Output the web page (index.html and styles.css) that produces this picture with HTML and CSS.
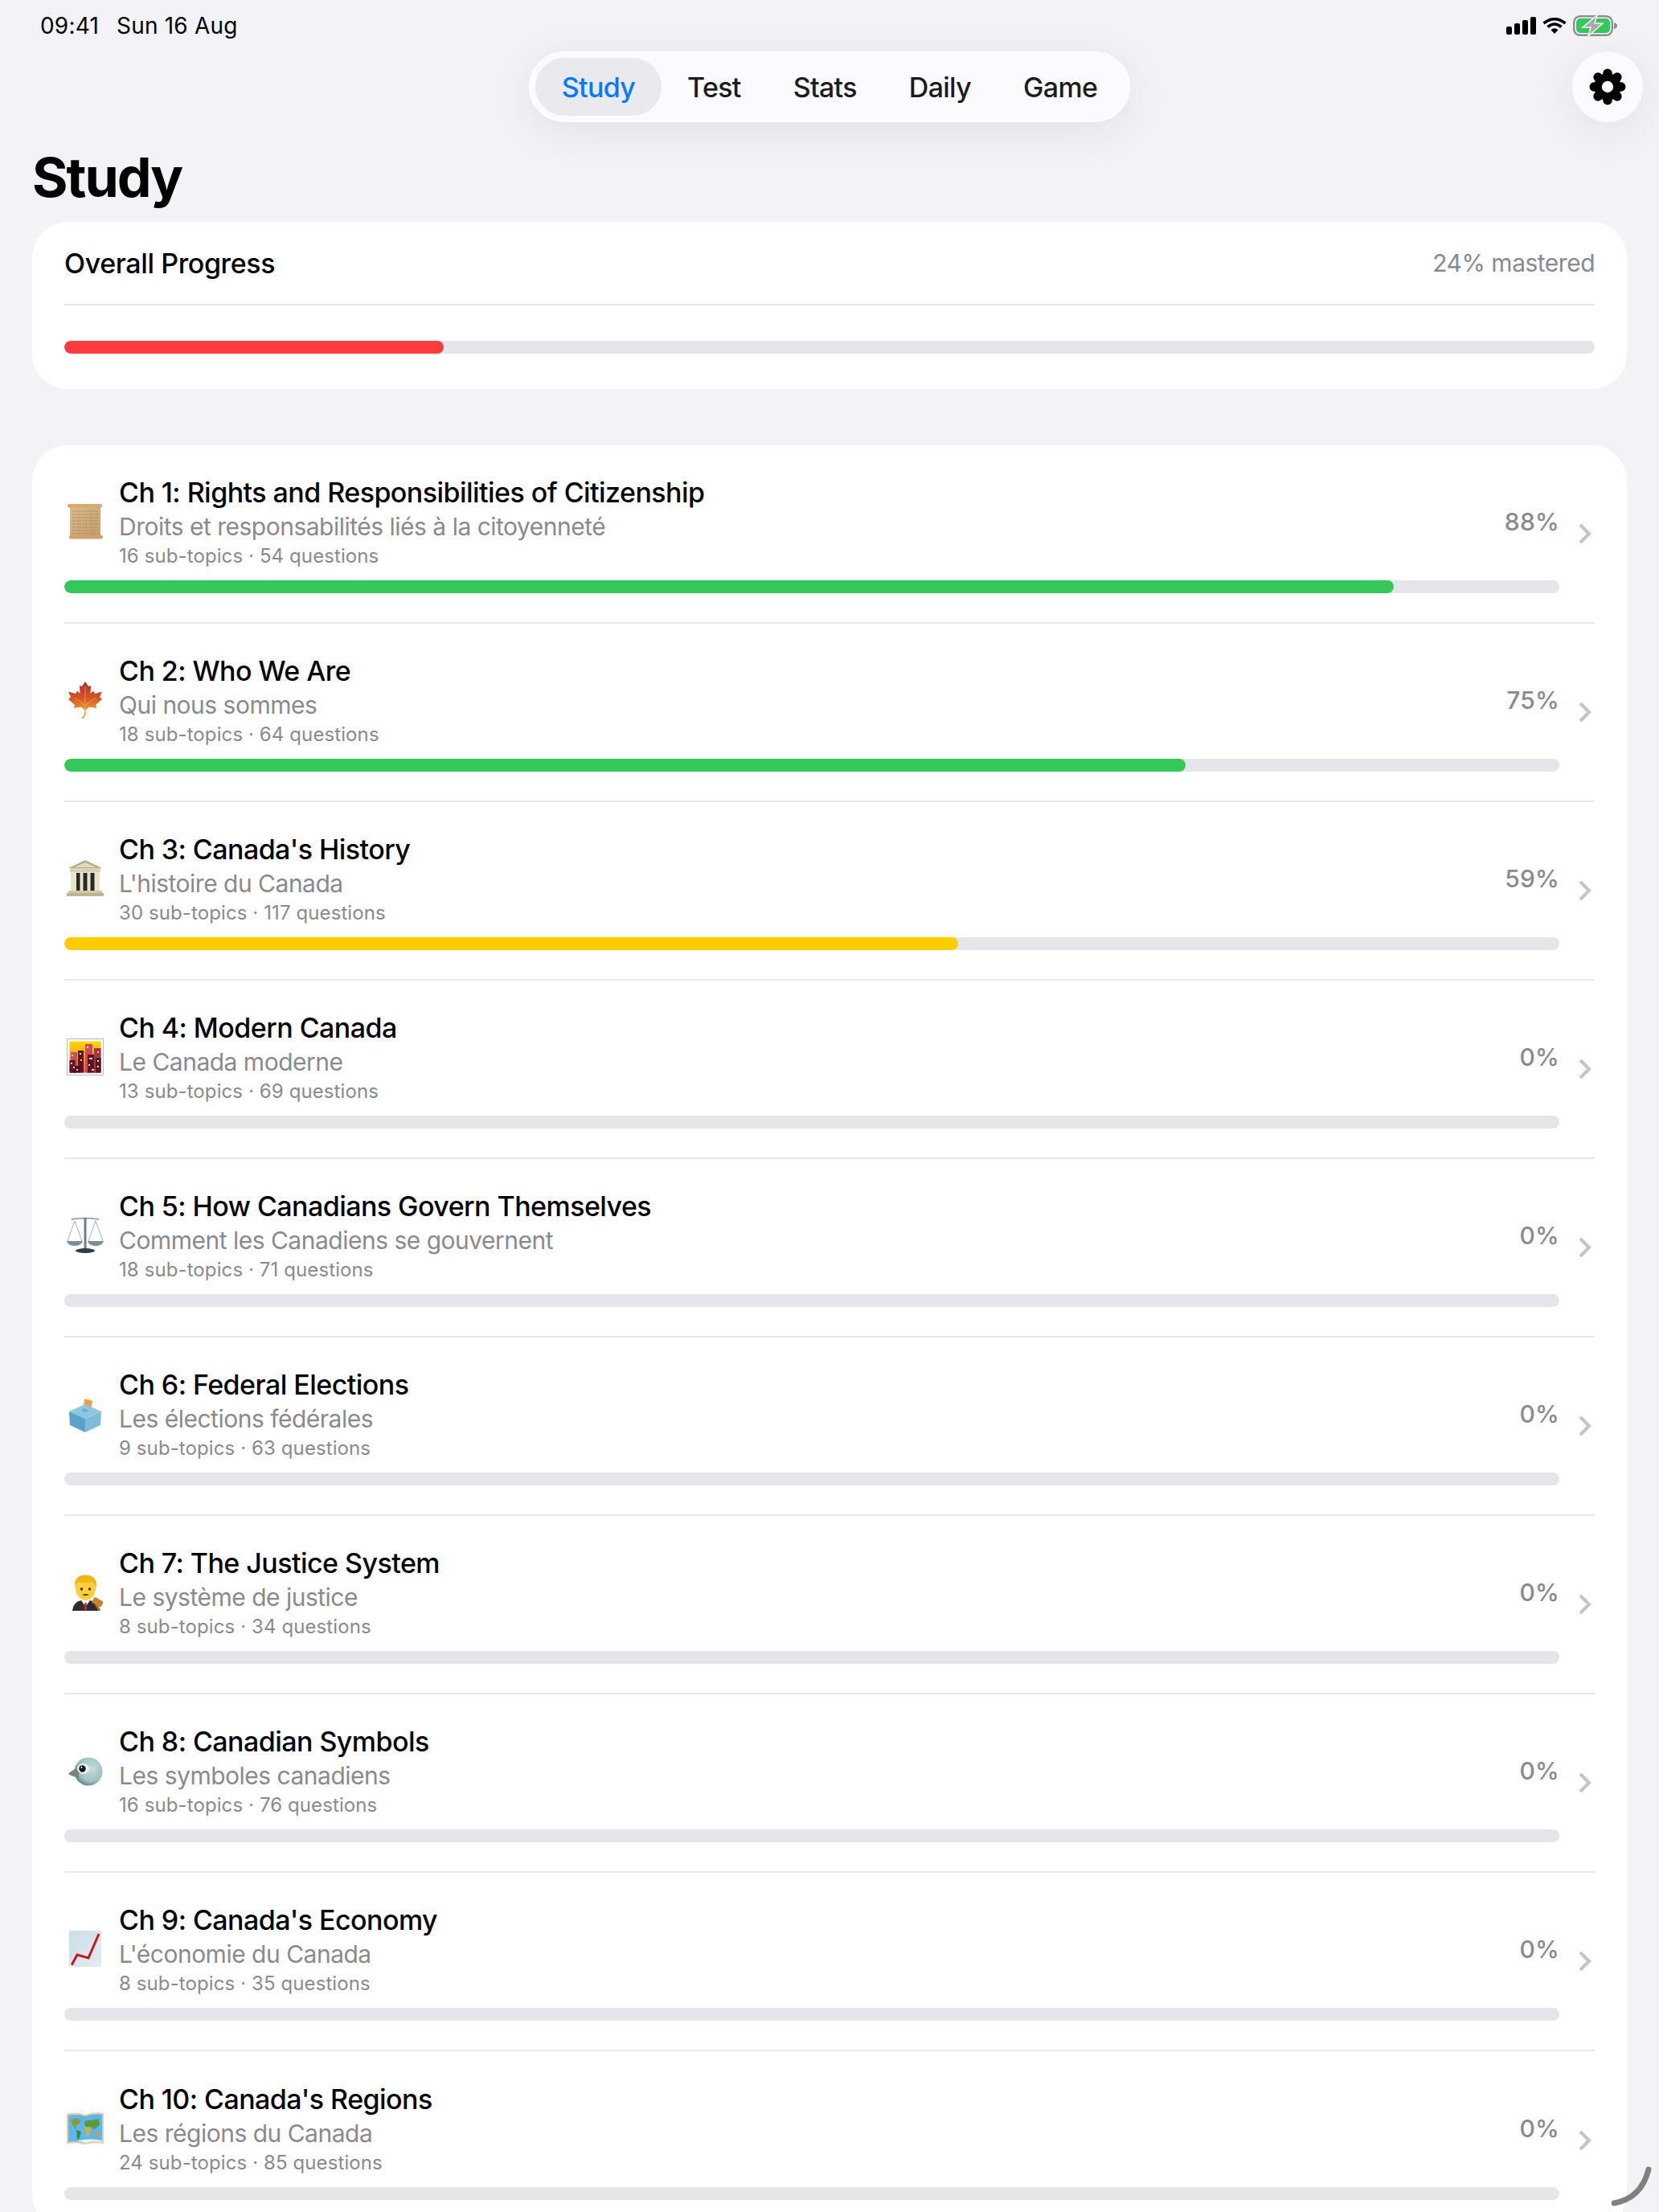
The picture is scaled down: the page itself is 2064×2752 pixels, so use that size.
FILE: index.html
```html
<!DOCTYPE html>
<html lang="en">
<head>
  <meta charset="UTF-8">
  <meta name="viewport" content="width=device-width, initial-scale=1.0">
  <title>Study</title>
  <link rel="stylesheet" href="styles.css">
</head>
<body>
<div class="page">

  <div class="status-bar">
    <div class="status-time"><span>09:41</span><span>Sun 16 Aug</span></div>
    <div class="status-icons">
      <svg width="37" height="22" viewBox="0 0 37 22"><rect x="0" y="12" width="7" height="10" rx="2"/><rect x="10" y="8" width="7" height="14" rx="2"/><rect x="20" y="4" width="7" height="18" rx="2"/><rect x="30" y="0" width="7" height="22" rx="2"/></svg>
      <svg width="30" height="20" viewBox="0 0 30 20"><path d="M1.5 7 Q15 -3.5 28.500 7" fill="none" stroke="#000" stroke-width="3.600"/><path d="M6.500 11.500 Q15 4.500 23.500 11.500" fill="none" stroke="#000" stroke-width="3.600"/><path d="M10.500 15.200 L15 20 L19.500 15.200 Q15 11.500 10.500 15.200Z"/></svg>
      <svg width="55" height="26" viewBox="0 0 55 26"><rect x="1.200" y="1.200" width="47.600" height="23.600" rx="7.500" fill="none" stroke="#8e8e93" stroke-width="2.400"/><rect x="4" y="4" width="42" height="18" rx="5" fill="#34c759"/><path d="M51 9 Q55 10 55 13 Q55 16 51 17Z" fill="#8e8e93"/><path d="M30 0 L12 15 L22 15 L19 26 L37 10 L27 10Z" fill="#a9a9ad" stroke="#f2f2f7" stroke-width="1.500"/></svg>
    </div>
  </div>

  <div class="top-bar">
    <nav class="tabs">
      <a class="tab active">Study</a>
      <a class="tab">Test</a>
      <a class="tab">Stats</a>
      <a class="tab">Daily</a>
      <a class="tab">Game</a>
    </nav>
    <div class="gear-btn">
      <svg width="46" height="46" viewBox="-24 -24 48 48">
        <g stroke="#000" stroke-width="12" stroke-linecap="round">
          <line x1="-17.500" y1="0" x2="17.500" y2="0"/>
          <line x1="0" y1="-17.500" x2="0" y2="17.500"/>
          <line x1="-12.400" y1="-12.400" x2="12.400" y2="12.400"/>
          <line x1="-12.400" y1="12.400" x2="12.400" y2="-12.400"/>
        </g>
        <circle r="17.500"/>
        <circle r="7.500" fill="#fbfbff"/>
      </svg>
    </div>
  </div>

  <h1 class="page-title">Study</h1>

  <section class="card overall">
    <div class="overall-head">
      <span class="overall-title">Overall Progress</span>
      <span class="overall-value">24% mastered</span>
    </div>
    <div class="bar"><div class="fill red" style="width:24.8%"></div></div>
  </section>

  <section class="card chapters">

    <div class="row">
      <div class="row-body">
        <div class="row-top">
          <svg class="emoji" viewBox="0 0 46 46">
            <defs><linearGradient id="paper" x1="0" y1="0" x2="1" y2="1"><stop offset="0" stop-color="#dcbd90"/><stop offset="1" stop-color="#c49c6a"/></linearGradient></defs>
            <rect x="4" y="3" width="38" height="40" fill="url(#paper)"/>
            <g stroke="#8c6c48" stroke-width=".8" stroke-dasharray="4 1 6 1 2 1" opacity=".6">
              <line x1="7" y1="10" x2="39" y2="10"/><line x1="7" y1="14" x2="39" y2="14"/><line x1="7" y1="18" x2="39" y2="18"/><line x1="7" y1="22" x2="39" y2="22"/><line x1="7" y1="26" x2="39" y2="26"/><line x1="7" y1="30" x2="39" y2="30"/><line x1="7" y1="34" x2="39" y2="34"/><line x1="7" y1="38" x2="36" y2="38"/>
            </g>
            <rect x="1" y="1" width="43" height="4.500" rx="2" fill="#d6aa72"/>
            <rect x="3" y="40" width="42" height="4.500" rx="2" fill="#cfa26a"/>
          </svg>
          <div class="row-text">
            <div class="row-title">Ch 1: Rights and Responsibilities of Citizenship</div>
            <div class="row-sub">Droits et responsabilités liés à la citoyenneté</div>
            <div class="row-meta">16 sub-topics · 54 questions</div>
          </div>
          <div class="row-pct">88%</div>
        </div>
        <div class="bar"><div class="fill green" style="width:88.9%"></div></div>
      </div>
      <svg class="chevron" width="18" height="28" viewBox="0 0 18 28"><path d="M3 3 L14 14 L3 25" /></svg>
    </div>

    <div class="row">
      <div class="row-body">
        <div class="row-top">
          <svg class="emoji" viewBox="0 0 46 46">
            <defs><linearGradient id="leaf" x1="0" y1="0" x2="0" y2="1"><stop offset="0" stop-color="#b02a2a"/><stop offset=".5" stop-color="#d4552a"/><stop offset="1" stop-color="#f4b030"/></linearGradient></defs>
            <path d="M23 38 Q23 43 19 46" fill="none" stroke="#d98a2c" stroke-width="1.500"/>
            <path d="M23 0 L27 6 L30 5 L29.500 15 L33 11.500 L35 15 L44 12.500 L41 19 L44 22 L36 29 L37.500 33 L28 31.500 L24 35 L23 41 L22 35 L18 31.500 L8.500 33 L10 29 L2 22 L5 19 L2 12.500 L11 15 L13 11.500 L16.500 15 L16 5 L19 6Z" fill="url(#leaf)"/>
            <path d="M23 6 L23 36 M23 30 L10 20 M23 30 L36 20" fill="none" stroke="#f8c860" stroke-width=".8" opacity=".7"/>
          </svg>
          <div class="row-text">
            <div class="row-title">Ch 2: Who We Are</div>
            <div class="row-sub">Qui nous sommes</div>
            <div class="row-meta">18 sub-topics · 64 questions</div>
          </div>
          <div class="row-pct">75%</div>
        </div>
        <div class="bar"><div class="fill green" style="width:75%"></div></div>
      </div>
      <svg class="chevron" width="18" height="28" viewBox="0 0 18 28"><path d="M3 3 L14 14 L3 25" /></svg>
    </div>

    <div class="row">
      <div class="row-body">
        <div class="row-top">
          <svg class="emoji" viewBox="0 0 46 46">
            <path d="M23 0 L44 10 L2 10Z" fill="#b8ae8a"/>
            <path d="M23 3 L36 9 L10 9Z" fill="#e0dac0"/>
            <rect x="4" y="10" width="38" height="5" fill="#d8d2b4"/>
            <rect x="5" y="15" width="36" height="23" fill="#e8e4cc"/>
            <rect x="12" y="16" width="4.500" height="22" fill="#2b2724"/>
            <rect x="20.500" y="16" width="5" height="22" fill="#2b2724"/>
            <rect x="29.500" y="16" width="5" height="22" fill="#2b2724"/>
            <rect x="2" y="38" width="42" height="3" fill="#d0c9a8"/>
            <rect x="0" y="41" width="46" height="4" fill="#bdb592"/>
          </svg>
          <div class="row-text">
            <div class="row-title">Ch 3: Canada's History</div>
            <div class="row-sub">L'histoire du Canada</div>
            <div class="row-meta">30 sub-topics · 117 questions</div>
          </div>
          <div class="row-pct">59%</div>
        </div>
        <div class="bar"><div class="fill yellow" style="width:59.8%"></div></div>
      </div>
      <svg class="chevron" width="18" height="28" viewBox="0 0 18 28"><path d="M3 3 L14 14 L3 25" /></svg>
    </div>

    <div class="row">
      <div class="row-body">
        <div class="row-top">
          <svg class="emoji" viewBox="0 0 46 46">
            <defs><linearGradient id="dusk" x1="0" y1="0" x2="0" y2="1"><stop offset="0" stop-color="#ffd800"/><stop offset=".6" stop-color="#f79030"/><stop offset="1" stop-color="#e8603a"/></linearGradient></defs>
            <rect x=".5" y=".5" width="45" height="45" fill="#fff" stroke="#b4c0c8"/>
            <rect x="3.500" y="3.500" width="39" height="39" fill="url(#dusk)"/>
            <rect x="5" y="17" width="8" height="26" fill="#c8505a"/>
            <rect x="3.500" y="27" width="7" height="15.500" fill="#5c1424"/>
            <rect x="14" y="15" width="7" height="27.500" fill="#5c1424"/>
            <rect x="9" y="34" width="7" height="8.500" fill="#4a0f1c"/>
            <rect x="23" y="7" width="9" height="35.500" fill="#d04a54"/>
            <rect x="26" y="20" width="9" height="22.500" fill="#5c1424"/>
            <rect x="34" y="12" width="8.500" height="30.500" fill="#a83440"/>
            <rect x="36" y="24" width="6.500" height="18.500" fill="#5c1424"/>
            <g fill="#ffe9a0"><rect x="5" y="30" width="2" height="2"/><rect x="8" y="35" width="2" height="2"/><rect x="12" y="38" width="2" height="2"/><rect x="16" y="18" width="2" height="2"/><rect x="17" y="26" width="2" height="2"/><rect x="25" y="10" width="2" height="2"/><rect x="28" y="24" width="4" height="2"/><rect x="27" y="32" width="2" height="2"/><rect x="31" y="38" width="3" height="2"/><rect x="38" y="16" width="2" height="2"/><rect x="38" y="27" width="2" height="2"/><rect x="38" y="34" width="2" height="2"/><rect x="6" y="20" width="2" height="2"/></g>
          </svg>
          <div class="row-text">
            <div class="row-title">Ch 4: Modern Canada</div>
            <div class="row-sub">Le Canada moderne</div>
            <div class="row-meta">13 sub-topics · 69 questions</div>
          </div>
          <div class="row-pct">0%</div>
        </div>
        <div class="bar"></div>
      </div>
      <svg class="chevron" width="18" height="28" viewBox="0 0 18 28"><path d="M3 3 L14 14 L3 25" /></svg>
    </div>

    <div class="row">
      <div class="row-body">
        <div class="row-top">
          <svg class="emoji" viewBox="0 0 46 46">
            <g fill="none" stroke="#8b9aa6" stroke-width=".8"><path d="M10 5 L1 30 M10 5 L19 30 M36 5 L27 30 M36 5 L45 30"/></g>
            <path d="M6 3 Q23 0 40 3" fill="none" stroke="#7b8c9a" stroke-width="1.600"/>
            <rect x="21.500" y="1" width="3" height="39" fill="#6a7f90"/>
            <path d="M0 30 H20 Q18 36 10 36 Q2 36 0 30Z" fill="#7d8e9b"/>
            <path d="M26 30 H46 Q44 36 36 36 Q28 36 26 30Z" fill="#7d8e9b"/>
            <ellipse cx="23" cy="42" rx="12" ry="3" fill="#2f3a44"/>
          </svg>
          <div class="row-text">
            <div class="row-title">Ch 5: How Canadians Govern Themselves</div>
            <div class="row-sub">Comment les Canadiens se gouvernent</div>
            <div class="row-meta">18 sub-topics · 71 questions</div>
          </div>
          <div class="row-pct">0%</div>
        </div>
        <div class="bar"></div>
      </div>
      <svg class="chevron" width="18" height="28" viewBox="0 0 18 28"><path d="M3 3 L14 14 L3 25" /></svg>
    </div>

    <div class="row">
      <div class="row-body">
        <div class="row-top">
          <svg class="emoji" viewBox="0 0 46 46">
            <path d="M20 18 L22.500 4 L32 7 L29 21Z" fill="#f0a040"/>
            <path d="M3 20 L23 11 L43 20 L23 29Z" fill="#8cc8e0"/>
            <path d="M21 16 L28 19 L23 21 L19 19Z" fill="#4f8fb0" opacity=".5"/>
            <path d="M3 20 L23 29 L23 46 L4 37Z" fill="#5aa2c6"/>
            <path d="M23 29 L43 20 L42 37 L23 46Z" fill="#7ebcd8"/>
          </svg>
          <div class="row-text">
            <div class="row-title">Ch 6: Federal Elections</div>
            <div class="row-sub">Les élections fédérales</div>
            <div class="row-meta">9 sub-topics · 63 questions</div>
          </div>
          <div class="row-pct">0%</div>
        </div>
        <div class="bar"></div>
      </div>
      <svg class="chevron" width="18" height="28" viewBox="0 0 18 28"><path d="M3 3 L14 14 L3 25" /></svg>
    </div>

    <div class="row">
      <div class="row-body">
        <div class="row-top">
          <svg class="emoji" viewBox="0 0 46 46">
            <path d="M7 46 Q8 35 18 33 H29 Q39 35 40 46Z" fill="#2c2c32"/>
            <path d="M18 33 L23.500 41 L29 33Z" fill="#f4f4f4"/>
            <path d="M22.500 36 H24.500 L25.500 44 L23.500 46 L21.500 44Z" fill="#c8202c"/>
            <ellipse cx="23.500" cy="18" rx="12.500" ry="15" fill="#ffd03a"/>
            <path d="M10 18 Q8 2 23 1.500 Q39 2 37 18 Q35 12 32 10 Q22 12 14 10 Q11 13 10 18Z" fill="#f2b518"/>
            <circle cx="18.500" cy="19" r="1.700" fill="#3a2a10"/><circle cx="28.500" cy="19" r="1.700" fill="#3a2a10"/>
            <path d="M19 26 Q23.500 24 28 26 Q23.500 28.500 19 26Z" fill="#5a3a10"/>
            <path d="M36 38 L41 46" stroke="#a8672a" stroke-width="3"/>
            <rect x="32" y="31" width="13" height="8" rx="2" transform="rotate(30 38 35)" fill="#c88232"/>
          </svg>
          <div class="row-text">
            <div class="row-title">Ch 7: The Justice System</div>
            <div class="row-sub">Le système de justice</div>
            <div class="row-meta">8 sub-topics · 34 questions</div>
          </div>
          <div class="row-pct">0%</div>
        </div>
        <div class="bar"></div>
      </div>
      <svg class="chevron" width="18" height="28" viewBox="0 0 18 28"><path d="M3 3 L14 14 L3 25" /></svg>
    </div>

    <div class="row">
      <div class="row-body">
        <div class="row-top">
          <svg class="emoji" viewBox="0 0 46 46">
            <defs><radialGradient id="dove" cx=".6" cy=".4" r=".65"><stop offset="0" stop-color="#c8dede"/><stop offset=".7" stop-color="#9dc0c0"/><stop offset="1" stop-color="#527f80"/></radialGradient></defs>
            <circle cx="27" cy="24" r="17.500" fill="url(#dove)"/>
            <path d="M2 27 Q6 22 16 19 L15 31 Q8 31 2 27Z" fill="#807f80"/>
            <ellipse cx="20.500" cy="20.500" rx="7.500" ry="6.500" fill="#eef2f0"/>
            <circle cx="19.500" cy="20.500" r="4.200" fill="#15181a"/>
            <circle cx="18.500" cy="19" r="1" fill="#fff"/>
          </svg>
          <div class="row-text">
            <div class="row-title">Ch 8: Canadian Symbols</div>
            <div class="row-sub">Les symboles canadiens</div>
            <div class="row-meta">16 sub-topics · 76 questions</div>
          </div>
          <div class="row-pct">0%</div>
        </div>
        <div class="bar"></div>
      </div>
      <svg class="chevron" width="18" height="28" viewBox="0 0 18 28"><path d="M3 3 L14 14 L3 25" /></svg>
    </div>

    <div class="row">
      <div class="row-body">
        <div class="row-top">
          <svg class="emoji" viewBox="0 0 46 46">
            <defs><linearGradient id="sheet" x1="0" y1="0" x2="1" y2="1"><stop offset="0" stop-color="#ccdde8"/><stop offset="1" stop-color="#e4ebf0"/></linearGradient></defs>
            <rect x="3" y="0" width="40" height="45" fill="url(#sheet)"/>
            <path d="M6.300 42.500 L13 30 L27 34 L40 4" fill="none" stroke="#c8181a" stroke-width="3"/>
          </svg>
          <div class="row-text">
            <div class="row-title">Ch 9: Canada's Economy</div>
            <div class="row-sub">L'économie du Canada</div>
            <div class="row-meta">8 sub-topics · 35 questions</div>
          </div>
          <div class="row-pct">0%</div>
        </div>
        <div class="bar"></div>
      </div>
      <svg class="chevron" width="18" height="28" viewBox="0 0 18 28"><path d="M3 3 L14 14 L3 25" /></svg>
    </div>

    <div class="row">
      <div class="row-body">
        <div class="row-top">
          <svg class="emoji" viewBox="0 0 46 46">
            <path d="M0 5 Q12 2 23 6 Q34 2 46 4 V42 Q34 40 23 43 Q12 40 0 42Z" fill="#eccaa8"/>
            <path d="M2 7 Q12 4 23 8 Q34 4 44 6 V40 Q34 38 23 41 Q12 38 2 40Z" fill="#5ab8f0"/>
            <path d="M5 12 L14 10 L18 14 L13 19 L11 24 L7 18Z" fill="#8c9a3c"/>
            <path d="M12 25 L18 27 L15 37 L13 36Z" fill="#3f8a30"/>
            <path d="M22 14 L40 11 L41 19 L34 24 L30 21 L23 21Z" fill="#5f9a38"/>
            <path d="M22 21 L30 22 L28 32 L25 33Z" fill="#d6b030"/>
            <path d="M35 28 L41 28 L40 33 L35 32Z" fill="#f09028"/>
            <path d="M14 38 Q30 35 44 38 V40 Q34 38 23 41 Q18 39 14 39Z" fill="#e8f4fa"/>
          </svg>
          <div class="row-text">
            <div class="row-title">Ch 10: Canada's Regions</div>
            <div class="row-sub">Les régions du Canada</div>
            <div class="row-meta">24 sub-topics · 85 questions</div>
          </div>
          <div class="row-pct">0%</div>
        </div>
        <div class="bar"></div>
      </div>
      <svg class="chevron" width="18" height="28" viewBox="0 0 18 28"><path d="M3 3 L14 14 L3 25" /></svg>
    </div>

  </section>

  <svg class="pencil-mark" width="50" height="50" viewBox="0 0 50 50"><path d="M3 46 Q37 40 46 4" /></svg>
</div>
</body>
</html>
```

FILE: styles.css
```css
* {
  box-sizing: border-box;
}
html, body {
  margin: 0;
  height: 2752px;
  overflow: hidden;
}
body {
  background-color: #f2f2f7;
  font-family: Inter, "Noto Sans", sans-serif;
  color: #000;
}
.page {
  position: relative;
  width: 2064px;
  height: 2752px;
  overflow: hidden;
  padding: 0 40px;
}

/* status bar */
.status-bar {
  display: flex;
  justify-content: space-between;
  align-items: center;
  height: 64px;
  margin: 0 -40px;
  padding: 0 52px 0 50px;
}
.status-time {
  display: flex;
  gap: 22px;
  font-size: 28px;
  letter-spacing: 0.2px;
}
.status-icons {
  display: flex;
  align-items: center;
  gap: 8px;
}

/* tabs + gear */
.top-bar {
  position: relative;
  display: flex;
  justify-content: center;
  height: 88px;
}
.tabs {
  display: flex;
  padding: 6px;
  border: 2px solid #fff;
  border-radius: 44px;
  background-color: #fbfbff;
  box-shadow: 0 10px 60px rgba(0, 0, 0, 0.08);
}
.tab {
  display: flex;
  align-items: center;
  padding: 0 32.500px;
  border-radius: 36px;
  font-size: 34px;
  font-weight: 500;
  letter-spacing: -0.7px;
  color: #1c1c1e;
}
.tab.active {
  background-color: #e9e9ee;
  color: #007aff;
}
.gear-btn {
  position: absolute;
  top: 0;
  right: -20px;
  display: flex;
  align-items: center;
  justify-content: center;
  width: 88px;
  height: 88px;
  border-radius: 50%;
  background-color: #fbfbff;
  box-shadow: 0 10px 60px rgba(0, 0, 0, 0.08);
}

.page-title {
  height: 124px;
  margin: 0;
  padding-top: 28px;
  font-size: 68px;
  line-height: 80px;
  font-weight: 700;
  letter-spacing: -2px;
}

/* cards */
.card {
  border-radius: 44px;
  background-color: #fff;
  padding: 0 40px;
}
.overall {
  height: 208px;
}
.overall-head {
  display: flex;
  justify-content: space-between;
  align-items: center;
  height: 104px;
  border-bottom: 2px solid #e8e8ec;
  margin-bottom: 44px;
}
.overall-title {
  font-size: 34px;
  font-weight: 500;
  letter-spacing: -0.4px;
}
.overall-value {
  font-size: 30px;
  letter-spacing: -0.5px;
  color: #8a8a8e;
}

.bar {
  height: 16px;
  border-radius: 8px;
  background-color: #e5e5ea;
  overflow: hidden;
}
.fill {
  height: 100%;
  border-radius: 8px;
}
.fill.red { background-color: #ff3b3f; }
.fill.green { background-color: #34c759; }
.fill.yellow { background-color: #ffcc00; }

.chapters {
  margin-top: 70px;
}
.row {
  display: flex;
  align-items: center;
  height: 222px;
  padding: 36px 0;
  border-bottom: 2px solid #e8e8ec;
}
.row:last-child {
  border-bottom: none;
}
.row-body {
  flex: 1;
  min-width: 0;
}
.row-top {
  display: flex;
  align-items: center;
  margin-bottom: 14px;
}
.emoji {
  flex: none;
  width: 46px;
  height: 46px;
  margin: 0 19px 0 3px;
}
.row-text {
  flex: 1;
  min-width: 0;
}
.row-title {
  font-size: 34px;
  line-height: 45px;
  font-weight: 550;
  letter-spacing: -0.55px;
}
.row-sub {
  font-size: 30px;
  line-height: 40px;
  letter-spacing: -0.5px;
  color: #8a8a8e;
}
.row-meta {
  font-size: 24px;
  line-height: 33px;
  letter-spacing: 0.1px;
  color: #8a8a8e;
}
.row-pct {
  font-size: 30px;
  font-weight: 500;
  letter-spacing: 0.2px;
  color: #8a8a8e;
}
.chevron {
  flex: none;
  margin-left: 23px;
  margin-right: 3px;
}
.chevron path {
  fill: none;
  stroke: #c4c4c7;
  stroke-width: 4;
}

.pencil-mark {
  position: absolute;
  left: 2005px;
  top: 2695px;
}
.pencil-mark path {
  fill: none;
  stroke: #808080;
  stroke-width: 7;
  stroke-linecap: round;
}
```
